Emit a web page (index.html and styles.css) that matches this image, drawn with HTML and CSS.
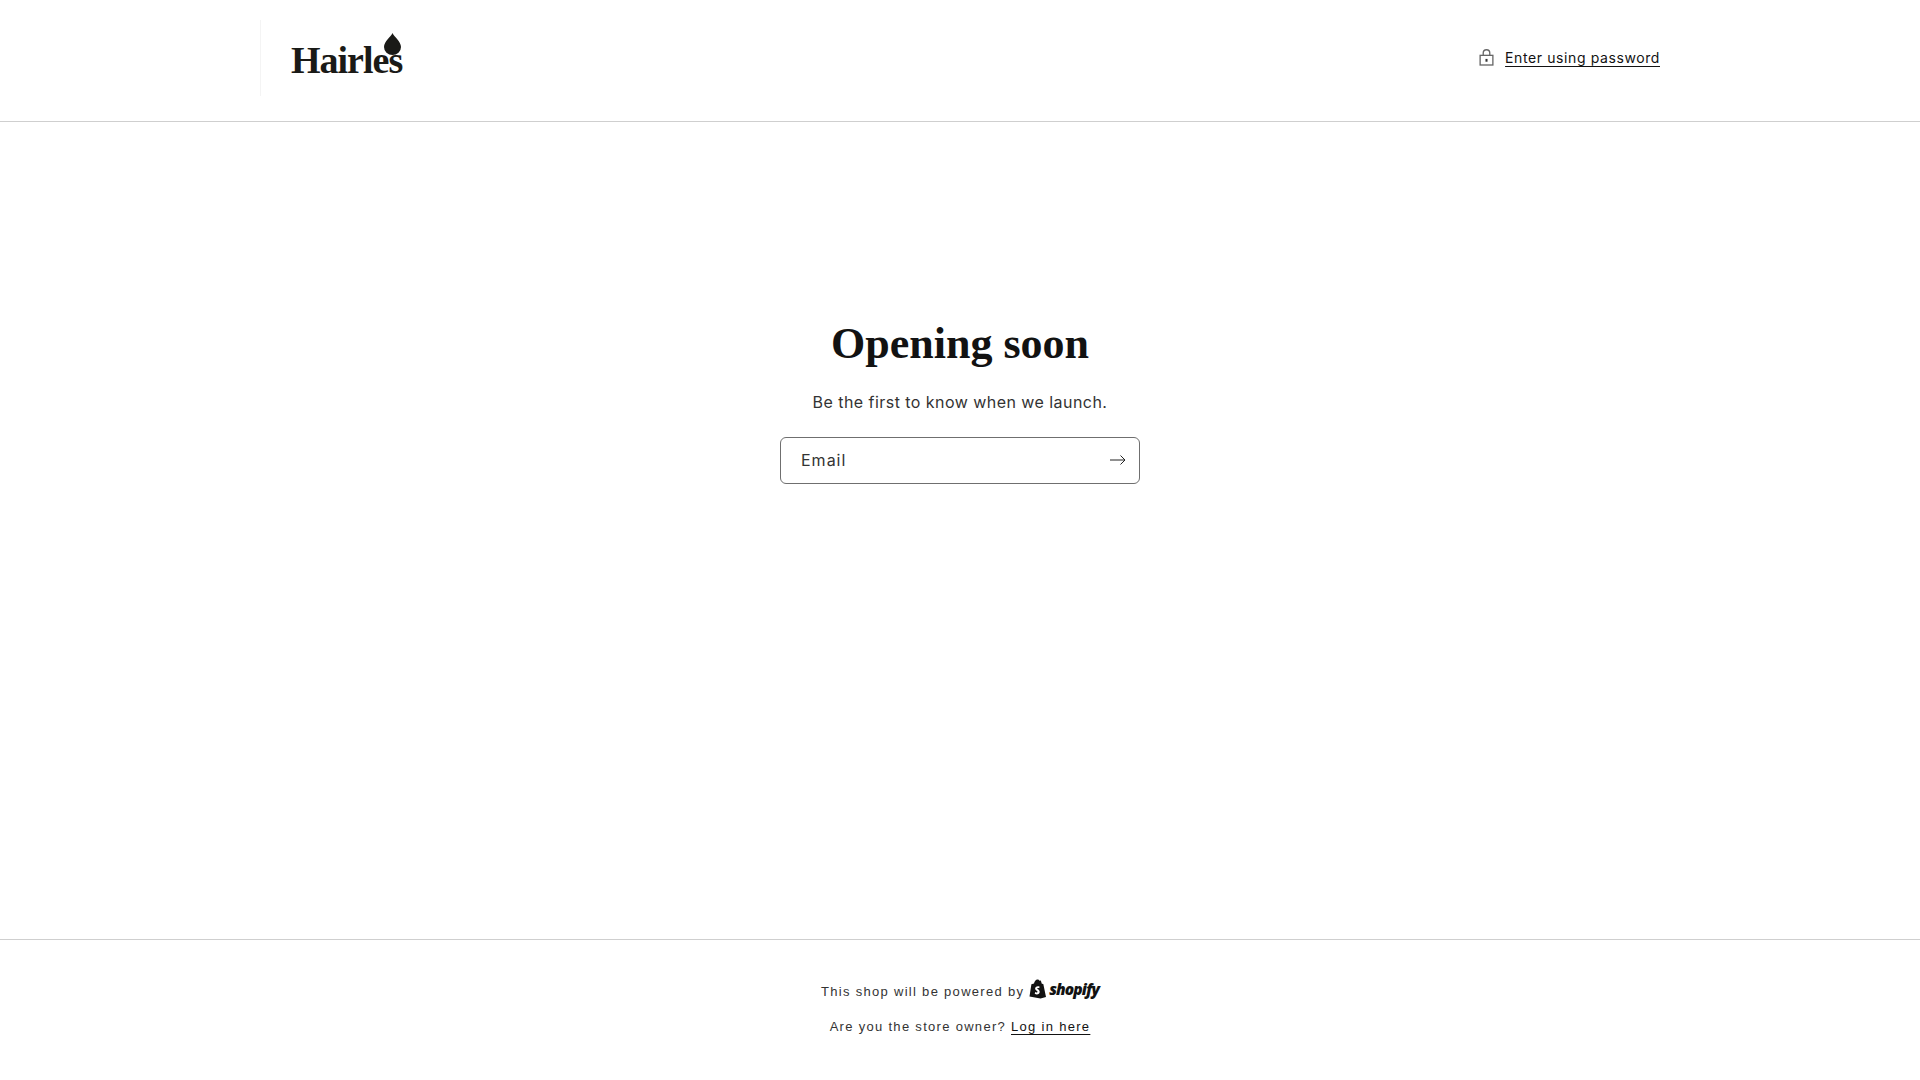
FILE: index.html
```html
<!DOCTYPE html>
<html lang="en">
<head>
<meta charset="UTF-8">
<title>Hairles</title>
<link rel="stylesheet" href="styles.css">
</head>
<body>
	<header class="site-header">
		<div class="header-inner">
			<a class="logo" href="#">
				<span class="logo-text">Hairles</span>
				<svg class="logo-drop" viewBox="0 0 17 22" width="17" height="22"><path d="M8.500 0C7 3.500 0 8.500 0 14a8.500 8 0 0 0 17 0C17 8.500 10 3.500 8.500 0z"/></svg>
			</a>
			<div class="password">
				<svg class="lock" viewBox="0 0 16 18" width="15" height="17" fill="none" stroke="#666" stroke-width="1.400"><rect x="1.200" y="6.700" width="13.600" height="10.300"/><path d="M4.500 6.700V4.200a3.500 3.500 0 0 1 7 0v2.500"/><path d="M8 10.500v3" stroke-width="2.200" stroke="#333"/></svg>
				<a class="link" href="#">Enter using password</a>
			</div>
		</div>
	</header>

	<main class="content">
		<h1>Opening soon</h1>
		<p class="lead">Be the first to know when we launch.</p>
		<form class="signup">
			<span class="signup-label">Email</span>
			<svg class="arrow" viewBox="0 0 16 12" width="16" height="12" fill="none" stroke="#222" stroke-width="1"><path d="M0 6h15M10.500 1.500 15 6l-4.500 4.500"/></svg>
		</form>
	</main>

	<footer class="site-footer">
		<p class="powered">This shop will be powered by
			<span class="shopify">
				<svg class="bag" viewBox="0 0 17 20" width="17" height="20"><path d="M.5 17.500 2.400 5.300 5 4.500C5.400 2.300 6.800.5 8.500.5c.9 0 1.500.5 2 1.300l1.300-.3 1 3.200 1.500.4L17 18l-5.500 1.500z"/><path fill="#fff" d="M10.700 7.700c-.6-.3-1.200-.4-1.800-.4-1.700 0-2.800 1.100-2.800 2.500 0 1.700 2.500 2.100 2.500 3 0 .5-.4.800-.9.800-.7 0-1.500-.5-1.500-.5l-.5 1.700s.8.700 2.100.7c1.700 0 2.900-1.100 2.900-2.800 0-2-2.500-2.300-2.500-3.100 0-.3.200-.6.900-.6.500 0 1 .2 1 .2z"/></svg>
				<span class="shopify-word">shopify</span>
			</span>
		</p>
		<p class="owner">Are you the store owner? <a class="link" href="#">Log in here</a></p>
	</footer>
</body>
</html>
```

FILE: styles.css
```css
* {
	box-sizing: border-box;
}

html,
body {
	height: 100%;
}

body {
	margin: 0;
	display: flex;
	flex-direction: column;
	background-color: #fff;
	color: #121212;
	font-family: Inter, "Liberation Sans", sans-serif;
	font-size: 16px;
}

.link {
	color: #121212;
	text-decoration: underline;
	text-underline-offset: 3px;
}

.site-header {
	height: 122px;
	border-bottom: 1px solid #cfcfcf;
}

.header-inner {
	width: 1400px;
	height: 100%;
	margin: 0 auto;
	padding-bottom: 6px;
	display: flex;
	align-items: center;
	justify-content: space-between;
}

.logo {
	position: relative;
	display: block;
	width: 142px;
	height: 76px;
	padding-left: 30px;
	border-left: 1px solid #f4f4f4;
	color: #1a1a17;
	text-decoration: none;
}

.logo-text {
	display: block;
	margin-top: 18px;
	font-family: "Liberation Serif", serif;
	font-weight: bold;
	font-size: 38px;
	line-height: 44px;
	letter-spacing: -1px;
}

.logo-drop {
	position: absolute;
	left: 123px;
	top: 13px;
	fill: #1a1a17;
}

.password {
	display: flex;
	align-items: center;
	gap: 11px;
	font-size: 14px;
	letter-spacing: 0.6px;
}

.content {
	flex: 1;
	display: flex;
	flex-direction: column;
	align-items: center;
	padding-top: 192px;
}

h1 {
	margin: 0;
	font-family: "Liberation Serif", serif;
	font-weight: bold;
	font-size: 44px;
	line-height: 60px;
}

.lead {
	margin: 16px 0 0;
	line-height: 24px;
	letter-spacing: 0.45px;
	color: #333;
}

.signup {
	width: 360px;
	height: 47px;
	margin-top: 23px;
	padding: 0 13px 1px 20px;
	display: flex;
	align-items: center;
	justify-content: space-between;
	border: 1px solid #6f6f6f;
	border-radius: 6px;
}

.signup-label {
	letter-spacing: 1px;
	color: #333;
}

.site-footer {
	height: 141px;
	padding-top: 39px;
	border-top: 1px solid #cfcfcf;
	text-align: center;
	font-family: "Liberation Sans", sans-serif;
	font-size: 13px;
	letter-spacing: 1.3px;
	color: #333;
}

.site-footer p {
	margin: 0;
}

.powered {
	height: 24px;
	line-height: 24px;
}

.site-footer .owner {
	margin-top: 16px;
}

.shopify {
	display: inline-flex;
	align-items: center;
	gap: 3px;
	vertical-align: -3px;
	color: #121212;
	letter-spacing: 0;
}

.bag {
	fill: #121212;
}

.shopify-word {
	font-family: "Open Sans", sans-serif;
	font-weight: 800;
	font-style: italic;
	font-size: 15.500px;
	line-height: 20px;
	letter-spacing: -0.9px;
}
```
